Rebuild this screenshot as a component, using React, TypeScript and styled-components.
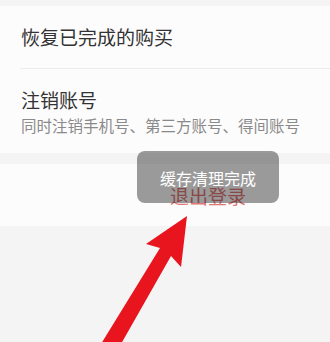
import React from "react";
import styled, { createGlobalStyle } from "styled-components";

const GlobalStyle = createGlobalStyle`
  html, body {
    margin: 0;
    padding: 0;
    background: #f5f4f4;
  }
  body {
    font-family: "Noto Sans CJK SC", "Noto Sans", sans-serif;
    width: 330px;
    height: 342px;
    overflow: hidden;
  }
`;

const Page = styled.div`
  position: relative;
  width: 330px;
  height: 342px;
  background: #f5f4f4;
  display: flex;
  flex-direction: column;
`;

const Group = styled.div<{ $gap: number }>`
  margin-top: ${({ $gap }) => $gap}px;
  background: #fdfcfc;
  display: flex;
  flex-direction: column;
`;

const Row = styled.div<{ $height: number }>`
  height: ${({ $height }) => $height}px;
  padding-left: 21px;
  display: flex;
  flex-direction: column;
  justify-content: center;
`;

const Divider = styled.div`
  height: 1px;
  margin-left: 20px;
  background: #ececec;
`;

const Title = styled.div`
  font-size: 19px;
  line-height: 24px;
  color: #333;
`;

const Sub = styled.div`
  margin-top: 3px;
  font-size: 15.5px;
  line-height: 20px;
  color: #8a8a8a;
  white-space: nowrap;
`;

const Logout = styled.div`
  height: 62px;
  display: flex;
  align-items: center;
  justify-content: center;
  padding-left: 86px;
  box-sizing: border-box;
  font-size: 19px;
  color: #e07676;
  letter-spacing: 0;
`;

const Toast = styled.div`
  position: absolute;
  left: 137px;
  top: 151px;
  width: 142px;
  height: 52px;
  box-sizing: border-box;
  padding-top: 17px;
  border-radius: 8px;
  background: rgba(0, 0, 0, 0.39);
  color: #fff;
  font-size: 16px;
  line-height: 20px;
  text-align: center;
`;

const Arrow = styled.svg`
  position: absolute;
  left: 0;
  top: 0;
`;

export default function App() {
  return (
    <>
      <GlobalStyle />
      <Page>
        <Group $gap={6}>
          <Row $height={62}>
            <Title>恢复已完成的购买</Title>
          </Row>
          <Divider />
          <Row $height={84}>
            <Title>注销账号</Title>
            <Sub>同时注销手机号、第三方账号、得间账号</Sub>
          </Row>
        </Group>
        <Group $gap={11}>
          <Logout>退出登录</Logout>
        </Group>
        <Toast>缓存清理完成</Toast>
        <Arrow width="330" height="342" viewBox="0 0 330 342">
          <polygon
            points="187,216 181,267 171,256 121,344 101,344 160,248 146,244"
            fill="#e8141e"
          />
        </Arrow>
      </Page>
    </>
  );
}
